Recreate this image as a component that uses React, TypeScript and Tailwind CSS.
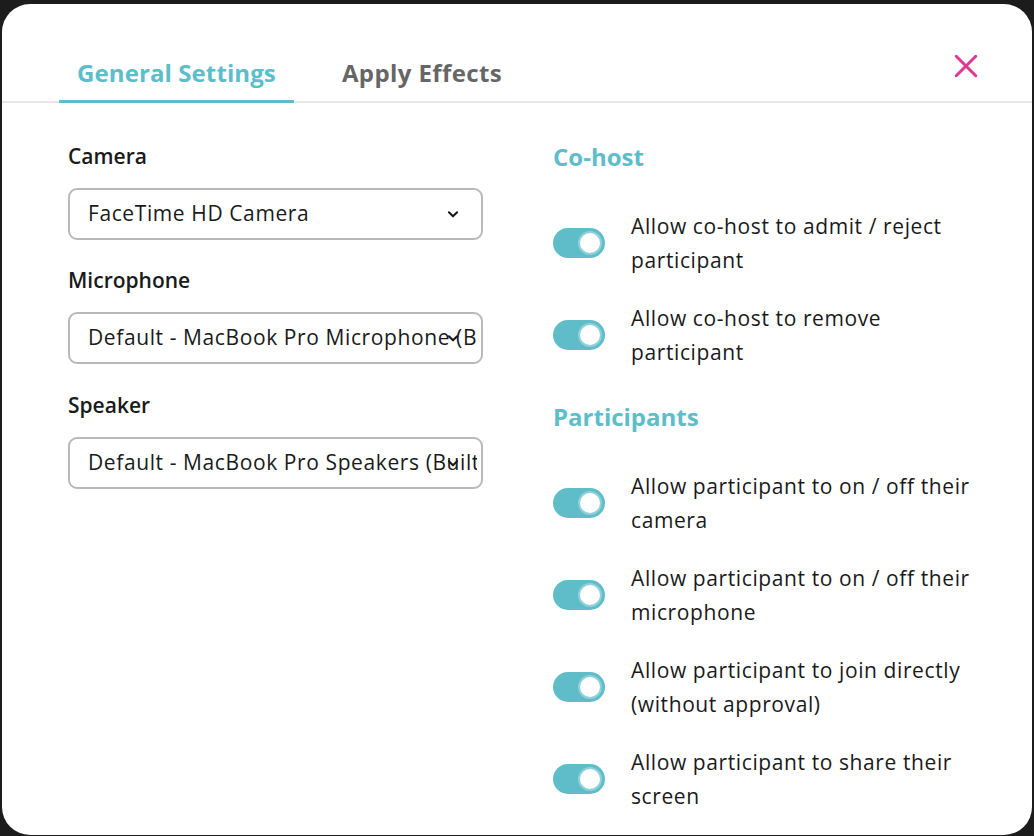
import React from "react";

const font = { fontFamily: "'Open Sans', 'Noto Sans', sans-serif" };

function Select({ value }: { value: string }) {
  return (
    <div className="relative mt-[19px] flex h-[52px] w-[415px] items-center overflow-hidden rounded-[9px] border-2 border-[#b9b9b9] bg-white pl-[18px] pr-[4px]">
      <span className="block overflow-hidden whitespace-nowrap text-[21px] tracking-[0.6px] text-[#1a1a1a]">{value}</span>
      <svg
        className="absolute right-[21px] top-1/2 -translate-y-1/2"
        width="14"
        height="14"
        viewBox="0 0 24 24"
        fill="none"
        stroke="#1a1a1a"
        strokeWidth="3.5"
        strokeLinecap="round"
        strokeLinejoin="round"
      >
        <path d="M5 9l7 7 7-7" />
      </svg>
    </div>
  );
}

function Toggle() {
  return (
    <div className="relative h-[30px] w-[52px] shrink-0 rounded-full bg-[#5fbdca]">
      <div className="absolute right-[3px] top-[3px] h-[24px] w-[24px] rounded-full border-2 border-[#8fd0d9] bg-white" />
    </div>
  );
}

function Item({ text }: { text: string }) {
  return (
    <div className="flex items-center gap-[26px]">
      <Toggle />
      <div className="w-[348px] text-[21px] leading-[34px] tracking-[0.6px] text-[#1a1a1a]">{text}</div>
    </div>
  );
}

export default function App() {
  return (
    <div className="h-[836px] w-[1034px] overflow-hidden bg-[#1c1c1c] px-[2px] pt-[4px]" style={font}>
      <div className="h-[831px] overflow-hidden rounded-[28px] bg-white">
        <div className="flex h-[99px] items-end border-b-2 border-[#e6e6e6] pl-[57px] pr-[53px]">
          <div className="flex gap-[30px]">
            <div className="-mb-[2px] flex h-[45px] items-start border-b-[3px] border-[#5cbdcb] px-[18px] text-[24px] font-bold leading-[30px] tracking-[0.1px] text-[#5cbdcb]">
              General Settings
            </div>
            <div className="-mb-[2px] flex h-[45px] items-start px-[18px] text-[24px] font-bold leading-[30px] tracking-[0.4px] text-[#666666]">
              Apply Effects
            </div>
          </div>
          <div className="mb-[22px] ml-auto self-end">
            <svg width="26" height="26" viewBox="0 0 24 24" fill="none" stroke="#dd3a8f" strokeWidth="2.8" strokeLinecap="round">
              <path d="M3 3l18 18M21 3L3 21" />
            </svg>
          </div>
        </div>
        <div className="flex pl-[66px] pt-[40px]">
          <div className="flex w-[415px] flex-col">
            <div className="text-[21px] font-semibold leading-[26px] text-[#1a1a1a]">Camera</div>
            <Select value="FaceTime HD Camera" />
            <div className="mt-[27px] text-[21px] font-semibold leading-[26px] text-[#1a1a1a]">Microphone</div>
            <Select value="Default - MacBook Pro Microphone (Built-in)" />
            <div className="mt-[28px] text-[21px] font-semibold leading-[26px] text-[#1a1a1a]">Speaker</div>
            <Select value="Default - MacBook Pro Speakers (Built-in)" />
          </div>
          <div className="ml-[70px] flex flex-col">
            <div className="-mt-[1px] text-[24px] font-bold leading-[30px] text-[#5cbdcb]">Co-host</div>
            <div className="mt-[37px] flex flex-col gap-[24px]">
              <Item text="Allow co-host to admit / reject participant" />
              <Item text="Allow co-host to remove participant" />
            </div>
            <div className="mt-[33px] text-[24px] font-bold leading-[30px] text-[#5cbdcb]">Participants</div>
            <div className="mt-[37px] flex flex-col gap-[24px]">
              <Item text="Allow participant to on / off their camera" />
              <Item text="Allow participant to on / off their microphone" />
              <Item text="Allow participant to join directly (without approval)" />
              <Item text="Allow participant to share their screen" />
            </div>
          </div>
        </div>
      </div>
    </div>
  );
}
